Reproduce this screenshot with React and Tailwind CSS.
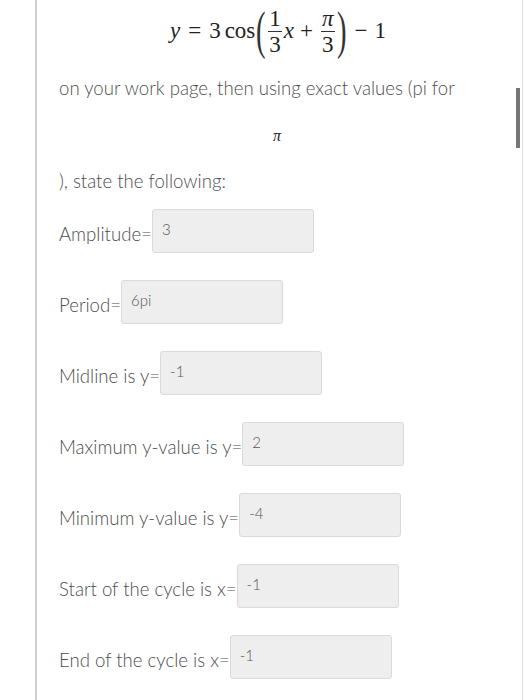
import React from 'react';

const rows = [
  { label: 'Amplitude=', value: '3' },
  { label: 'Period=', value: '6pi' },
  { label: 'Midline is y=', value: '-1' },
  { label: 'Maximum y-value is y=', value: '2' },
  { label: 'Minimum y-value is y=', value: '-4' },
  { label: 'Start of the cycle is x=', value: '-1' },
  { label: 'End of the cycle is x=', value: '-1' },
];

const Frac = ({ top, bottom, italicTop }) => (
  <span className="inline-flex flex-col items-center mx-[2px] text-[23px] leading-[25px]">
    <span className={`px-[1px] ${italicTop ? 'italic' : ''}`}>{top}</span>
    <span className="h-px w-full bg-[#333]" />
    <span className="px-[1px]">{bottom}</span>
  </span>
);

const Paren = ({ c }) => (
  <span className="inline-flex justify-center w-[11px] h-[56px] items-center overflow-visible">
    <span className="text-[52px] leading-[56px] scale-x-[0.55] font-light text-[#333]">{c}</span>
  </span>
);

const Equation = () => (
  <div
    className="flex items-center justify-center h-[56px] text-[23px] text-[#222] pr-[28px]"
    style={{ fontFamily: '"Liberation Serif", serif' }}
  >
    <span className="italic">y</span>
    <span className="mx-[8px]">=</span>
    <span>3</span>
    <span className="ml-[4px]">cos</span>
    <Paren c="(" />
    <Frac top="1" bottom="3" />
    <span className="italic">x</span>
    <span className="mx-[6px]">+</span>
    <Frac top="π" bottom="3" italicTop />
    <Paren c=")" />
    <span className="ml-[7px] mr-[7px]">−</span>
    <span>1</span>
  </div>
);

const App = () => {
  return (
    <div className="relative w-[525px] h-[700px] bg-white overflow-hidden" style={{ fontFamily: 'Lato, "Liberation Sans", sans-serif' }}>
      <div className="ml-[35px] h-full border-l-2 border-[#cfcfcf] pl-[22px] pt-[3px] text-[#4d4d4d]">
        <Equation />
        <p className="mt-[17px] text-[18.6px] leading-[24px] font-light">
          on your work page, then using exact values (pi for
        </p>
        <div className="mt-[24px] h-[22px] flex justify-center pr-[30px] text-[16px] italic text-[#222]" style={{ fontFamily: '"Liberation Serif", serif' }}>
          π
        </div>
        <p className="mt-[23px] text-[18.6px] leading-[24px] font-light">), state the following:</p>
        <div className="mt-[16px] flex flex-col gap-[27px]">
          {rows.map((r) => (
            <div key={r.label} className="flex items-end h-[44px]">
              <span className="text-[18.6px] leading-[24px] font-light mb-[7px]">{r.label}</span>
              <div className="w-[162px] h-[44px] bg-[#eeeeee] border border-[#dadada] rounded-[3px] px-[9px] pt-[9px] text-[15px] leading-[20px] font-light text-[#555]">
                {r.value}
              </div>
            </div>
          ))}
        </div>
      </div>
      <div className="absolute left-[516px] top-[88px] w-[4px] h-[60px] bg-[#777]" />
      <div className="absolute left-[522px] top-0 w-px h-full bg-[#e2e2e2]" />
    </div>
  );
};

export default App;
